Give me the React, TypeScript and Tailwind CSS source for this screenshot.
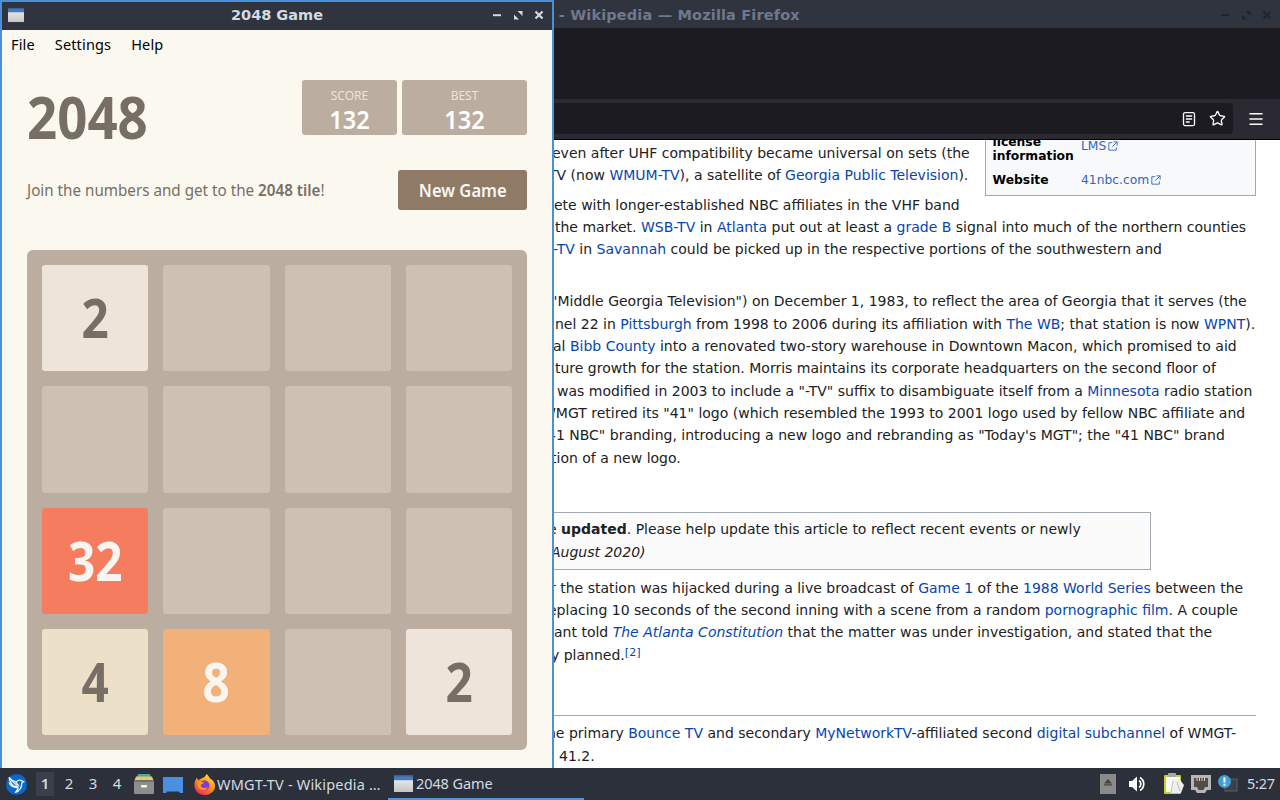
import React from "react";
import { clsx } from "clsx";
import { Menu, Star } from "lucide-react";

type Run = string | { link: string; italic?: boolean } | { bold: string } | { italic: string } | { cite: string };

type Line = {
	className: string;
	runs: Run[];
};

const LEAD: Line[] = [
	{ className: "ml-[-2px]", runs: ["even after UHF compatibility became universal on sets (the"] },
	{ className: "ml-[-6px]", runs: ["TV (now ", { link: "WMUM-TV" }, "), a satellite of ", { link: "Georgia Public Television" }, ")."] },
];

const MARKET: Line[] = [
	{ className: "ml-[0px]", runs: ["ete with longer-established NBC affiliates in the VHF band"] },
	{ className: "ml-[1px]", runs: ["the market. ", { link: "WSB-TV" }, " in ", { link: "Atlanta" }, " put out at least a ", { link: "grade B" }, " signal into much of the northern counties"] },
	{ className: "ml-[-1px]", runs: [{ link: "-TV" }, " in ", { link: "Savannah" }, " could be picked up in the respective portions of the southwestern and"] },
];

const HISTORY: Line[] = [
	{ className: "ml-[-3px]", runs: ["\"Middle Georgia Television\") on December 1, 1983, to reflect the area of Georgia that it serves (the"] },
	{ className: "ml-[1px]", runs: ["nel 22 in ", { link: "Pittsburgh" }, " from 1998 to 2006 during its affiliation with ", { link: "The WB" }, "; that station is now ", { link: "WPNT" }, ")."] },
	{ className: "ml-[-1px]", runs: ["al ", { link: "Bibb County" }, " into a renovated two-story warehouse in Downtown Macon, which promised to aid"] },
	{ className: "ml-[1px]", runs: ["ture growth for the station. Morris maintains its corporate headquarters on the second floor of"] },
	{ className: "ml-[3px]", runs: ["was modified in 2003 to include a \"-TV\" suffix to disambiguate itself from a ", { link: "Minnesota" }, " radio station"] },
	{ className: "ml-[-12px]", runs: ["WMGT retired its \"41\" logo (which resembled the 1993 to 2001 logo used by fellow NBC affiliate and"] },
	{ className: "ml-[-7px]", runs: ["41 NBC\" branding, introducing a new logo and rebranding as \"Today's MGT\"; the \"41 NBC\" brand"] },
	{ className: "ml-[-3px]", runs: ["tion of a new logo."] },
];

const NOTICE: Line[] = [
	{ className: "ml-[-6px]", runs: ["e ", { bold: "updated" }, ". Please help update this article to reflect recent events or newly"] },
	{ className: "ml-[-3px]", runs: [{ italic: "August 2020)" }] },
];

const HIJACK: Line[] = [
	{ className: "ml-[-4px]", runs: ["r the station was hijacked during a live broadcast of ", { link: "Game 1" }, " of the ", { link: "1988 World Series" }, " between the"] },
	{ className: "ml-[-6px]", runs: ["eplacing 10 seconds of the second inning with a scene from a random ", { link: "pornographic film" }, ". A couple"] },
	{ className: "ml-[0px]", runs: ["ant told ", { link: "The Atlanta Constitution", italic: true }, " that the matter was under investigation, and stated that the"] },
	{ className: "ml-[-3px]", runs: ["y planned.", { cite: "[2]" }] },
];

const DIGITAL: Line[] = [
	{ className: "ml-[-7px]", runs: ["he primary ", { link: "Bounce TV" }, " and secondary ", { link: "MyNetworkTV" }, "-affiliated second ", { link: "digital subchannel" }, " of WMGT-"] },
	{ className: "ml-[5px]", runs: ["41.2."] },
];

const BOARD = [2, 0, 0, 0, 0, 0, 0, 0, 32, 0, 0, 0, 4, 8, 0, 2];

const TILE_STYLES: Record<number, string> = {
	0: "bg-[#cdc1b3]",
	2: "bg-[#eee4da] text-[#776e65]",
	4: "bg-[#ece0c8] text-[#776e65]",
	8: "bg-[#f2b179] text-[#f9f6f2]",
	32: "bg-[#f67c5f] text-[#f9f6f2]",
};

function TextRun({ run }: { run: Run }) {
	if (typeof run === "string") return <>{run}</>;
	if ("link" in run) return <a className={clsx("text-[#0645ad]", run.italic && "italic")}>{run.link}</a>;
	if ("bold" in run) return <b>{run.bold}</b>;
	if ("cite" in run) return <span className="relative -top-1 text-[11.2px] leading-none text-[#0645ad]">{run.cite}</span>;
	return <i>{run.italic}</i>;
}

function Lines({ lines }: { lines: Line[] }) {
	return (
		<>
			{lines.map((line, i) => (
				<div key={i} className={clsx("h-[22.4px] whitespace-pre", line.className)}>
					{line.runs.map((run, j) => (
						<TextRun key={j} run={run} />
					))}
				</div>
			))}
		</>
	);
}

function WindowButtons({ className }: { className?: string }) {
	return (
		<svg viewBox="0 0 52 10" className={clsx("h-[10px] w-[52px]", className)} fill="none" stroke="currentColor">
			<path d="M1 5.2h8" strokeWidth="2" />
			<path d="M25.5 1h5v5zM22 4.500v5h5z" fill="currentColor" stroke="none" />
			<path d="M43.5 1.5l7 7M50.5 1.5l-7 7" strokeWidth="2.2" />
		</svg>
	);
}

function WindowIcon({ className }: { className?: string }) {
	return (
		<svg viewBox="0 0 20 18" preserveAspectRatio="none" className={className}>
			<defs>
				<linearGradient id="pane" x1="0" y1="0" x2="0" y2="1">
					<stop offset="0" stopColor="#f2f2f2" />
					<stop offset="1" stopColor="#c6c6c6" />
				</linearGradient>
			</defs>
			<rect width="20" height="18" fill="url(#pane)" />
			<rect width="20" height="5.5" fill="#4a78b8" />
			<rect width="20" height="1.5" fill="#3a5f99" />
		</svg>
	);
}

function ExternalIcon() {
	return (
		<svg viewBox="0 0 12 12" className="ml-[2px] inline h-[10px] w-[10px] align-[-1px]" fill="none" stroke="#3366bb" strokeWidth="1.1">
			<path d="M5 2H1v9h9V7.500M6.500 1H11v4.500M11 1L5 7" />
		</svg>
	);
}

function ScoreBox({ label, value, className }: { label: string; value: number; className: string }) {
	return (
		<div className={clsx("flex h-[55px] flex-col items-center rounded-[3px] bg-[#bbada0]", className)}>
			<div className="mt-[6px] text-[12px] leading-[20px] text-[#eee4da]">{label}</div>
			<div className="-mt-px scale-x-[0.94] text-[25px] font-semibold leading-[28px] text-white">{value}</div>
		</div>
	);
}

function GameWindow() {
	return (
		<div className="flex h-full w-[554px] shrink-0 flex-col border-x-2 border-t-2 border-[#4a90d9] bg-[#fbf8ef]">
			<div className="flex h-7 shrink-0 items-center bg-[#2f343f] pl-[6px] pr-2 text-[#d3dae3]">
				<WindowIcon className="-mt-[3px] h-[14px] w-4" />
				<div className="ml-[38px] flex-1 pb-px text-center font-['DejaVu_Sans',sans-serif] text-[14.5px] font-bold leading-none">2048 Game</div>
				<WindowButtons className="-mt-[3px]" />
			</div>
			<div className="flex h-[30px] shrink-0 items-center gap-[20px] px-[9px] font-['Noto_Sans',sans-serif] text-[14.5px] tracking-[0.15px] text-black">
				<span>File</span>
				<span>Settings</span>
				<span>Help</span>
			</div>
			<div className="px-[25px] pt-5 font-['Noto_Sans',sans-serif] text-[#776e65]">
				<div className="flex h-[90px] justify-between">
					<h1 className="mt-[2px] origin-left scale-x-[0.895] text-[59px] font-bold leading-[68px]">2048</h1>
					<div className="flex gap-[5px]">
						<ScoreBox label="SCORE" value={132} className="w-[95px]" />
						<ScoreBox label="BEST" value={132} className="w-[125px]" />
					</div>
				</div>
				<div className="flex h-10 items-center justify-between">
					<p className="origin-left scale-x-[0.95] whitespace-nowrap text-[16px]">
						Join the numbers and get to the <b className="font-semibold">2048 tile</b>!
					</p>
					<button className="h-10 w-[129px] rounded-[3px] bg-[#8f7a66] text-[18px] font-semibold text-[#f9f6f2]">
						<span className="inline-block scale-x-[0.92] whitespace-nowrap">New Game</span>
					</button>
				</div>
				<div className="mt-10 grid h-[500px] w-[500px] grid-cols-4 grid-rows-4 gap-[15px] rounded-[6px] bg-[#bbada0] p-[15px]">
					{BOARD.map((value, i) => (
						<div
							key={i}
							className={clsx("flex items-center justify-center rounded-[3px] text-[53px] font-bold leading-none", TILE_STYLES[value])}
						>
							{value > 0 && <span className="-mt-px scale-x-[0.9]">{value}</span>}
						</div>
					))}
				</div>
			</div>
		</div>
	);
}

function BrowserChrome() {
	return (
		<>
			<div className="flex h-7 items-center justify-between bg-[#2f343f] pr-[8px]">
				<div className="ml-[-5px] whitespace-pre pt-[3px] font-['DejaVu_Sans',sans-serif] text-[14.5px] font-bold leading-none tracking-[0.15px] text-[#70788d]">' - Wikipedia — Mozilla Firefox</div>
				<WindowButtons className="mt-[2px] text-[#20242c]" />
			</div>
			<div className="h-[71px] bg-[#1c1b22]" />
			<div className="flex h-[41px] items-center border-b border-black bg-[#2b2a33] pb-[2px]">
				<div className="flex h-[31px] w-[679px] items-center justify-end gap-[12px] rounded-r-[4px] bg-[#1c1b22] pr-[7px] pt-px text-[#fbfbfe]">
					<svg viewBox="0 0 16 16" className="h-4 w-4" fill="none" stroke="currentColor" strokeWidth="1.3" strokeLinecap="round">
						<rect x="2.5" y="1.6" width="11" height="13" rx="1.6" />
						<path d="M5.3 5h5.4M5.3 8h5.4M5.3 11h3" />
					</svg>
					<Star className="h-[17px] w-[17px]" strokeWidth={1.9} />
				</div>
				<Menu className="ml-[14px] mt-px h-[18px] w-[18px] text-[#fbfbfe]" strokeWidth={2} />
			</div>
		</>
	);
}

function Infobox() {
	return (
		<div className="float-right mr-6 -mt-[2px] h-[56px] w-[271px] overflow-hidden border border-t-0 border-[#a2a9b1] bg-[#f8f9fa] px-[6.500px] text-[12.32px] leading-[14px] text-black">
			<div className="-mt-[5px] flex h-[29px]">
				<div className="w-[88.5px] font-bold">license information</div>
				<div className="pt-[4px] text-[#3366bb]">LMS<ExternalIcon /></div>
			</div>
			<div className="mt-[9px] flex">
				<div className="w-[88.5px] font-bold">Website</div>
				<div className="text-[#3366bb]">41nbc.com<ExternalIcon /></div>
			</div>
		</div>
	);
}

function BrowserWindow() {
	return (
		<div className="h-full w-[726px] overflow-hidden bg-white">
			<BrowserChrome />
			<div className="pt-[1.8px] font-['DejaVu_Sans',sans-serif] text-[14px] leading-[22.4px] text-[#202122]">
				<Infobox />
				<div className="mb-[7px]"><Lines lines={LEAD} /></div>
				<div className="mb-[29.4px]"><Lines lines={MARKET} /></div>
				<Lines lines={HISTORY} />
				<div className="mt-[43px] h-[58px] w-[597px] border border-l-0 border-[#a2a9b1] bg-[#fbfbfb] pt-[5px]">
					<Lines lines={NOTICE} />
				</div>
				<div className="mt-[6.4px]"><Lines lines={HIJACK} /></div>
				<div className="mr-6 mt-[48.6px] border-t border-[#a2a9b1] pt-[6.5px]">
					<Lines lines={DIGITAL} />
				</div>
			</div>
		</div>
	);
}

function FirefoxIcon() {
	return (
		<svg viewBox="0 0 24 24" className="h-[23px] w-[23px]">
			<defs>
				<linearGradient id="flame" x1="0.8" y1="0" x2="0.2" y2="1">
					<stop offset="0" stopColor="#ffe33c" />
					<stop offset="0.5" stopColor="#ff8a1c" />
					<stop offset="1" stopColor="#f0225f" />
				</linearGradient>
			</defs>
			<path d="M14 1c2 1.500 3 3 3.500 4.500C21 7.500 23 10 23 13.500 23 19 18 23 12 23S1.500 18.500 1.500 12.500c0-3 1-5.500 2.500-7.500l1.500 2.500L9 5.500C11 5 13 4 14 1z" fill="url(#flame)" />
			<circle cx="12" cy="13" r="5.200" fill="#7a3fd0" />
			<path d="M4.500 9c3-1 4 1 7 1-1 2-3 1.500-3.500 3 1 3 5 3.500 7.500 1.500C14 19 7 18.500 5 14z" fill="#ff9a22" />
		</svg>
	);
}

function Launchers() {
	return (
		<>
			<svg viewBox="0 0 20 20" className="ml-[6px] h-[21px] w-[21px]">
				<circle cx="10" cy="10" r="10" fill="#0a68c8" />
				<path d="M3 3.500c2 2.500 4.500 3.500 7 4.200C11 5.500 14 5 17 7.500c-1.500 0-2 .5-2 1.500 0 4-2 7-6 8.500 2-2 2.800-3.500 2.300-5.500C7 12.500 4 9 3 3.500zM3 8c1 3 4 5 7.500 5" fill="none" stroke="#e6f3ff" strokeWidth="1.300" strokeLinejoin="round" />
				<path d="M4 5l6.500 6M9.500 8l3 3.500" stroke="#e6f3ff" strokeWidth="1.200" />
			</svg>
			<div className="ml-[9px] flex h-6 text-[15px]">
				<span className="flex w-[18px] justify-center bg-[#3b3f4b] font-semibold">1</span>
				<span className="ml-[3px] w-6 text-center">2</span>
				<span className="w-6 text-center">3</span>
				<span className="w-6 text-center">4</span>
			</div>
			<svg viewBox="0 0 20 20" className="ml-[5px] h-5 w-5">
				<path d="M4 0h12l1 4H3z" fill="#4aa9a8" />
				<path d="M2 2.500h16l1.500 4H.500z" fill="#e6cb61" />
				<rect y="6" width="20" height="14" rx="1" fill="#8b8e8d" />
				<rect y="6" width="20" height="2" fill="#6f7373" />
				<rect x="7" y="11" width="6" height="2.500" rx="1" fill="#fff" />
			</svg>
			<svg viewBox="0 0 20 16" className="ml-[9px] mt-px h-4 w-5">
				<path d="M0 0h20v16h-3l-1-1.500H4L3 16H0z" fill="#4a90e2" />
			</svg>
		</>
	);
}

function Tray() {
	return (
		<div className="ml-auto flex items-center">
			<svg viewBox="0 0 16 20" className="h-5 w-4">
				<rect width="16" height="20" fill="#8d8b8a" />
				<path d="M8 5l4 4.500H4zM4 10.200h8v1.300H4z" fill="#45443f" />
			</svg>
			<svg viewBox="0 0 18 16" className="ml-3 h-4 w-[18px]">
				<path d="M1 5h3l5-4.500v15L4 11H1z" fill="#fff" />
				<path d="M11 4.500c2.500 1.800 2.500 5.200 0 7M12 1.500c5 3 5 10 0 13" fill="none" stroke="#fff" strokeWidth="1.700" />
			</svg>
			<svg viewBox="0 0 20 22" className="ml-[18px] h-[22px] w-5">
				<rect y="2" width="17" height="19" rx="1" fill="#c7cf32" />
				<rect x="2" y="4" width="14" height="15" fill="#fafaf5" />
				<rect x="4" width="8" height="4" rx="1" fill="#a9aaa5" />
				<path d="M9 7h7l4 5-3 8H7z" fill="#ededeb" />
				<path d="M9 8l-2 11M13 9l3 9" stroke="#aaa" strokeWidth=".7" />
			</svg>
			<svg viewBox="0 0 20 18" className="ml-[7px] h-[18px] w-5">
				<path d="M0 0h20v15h-4l-2 3H6l-2-3H0z" fill="#b5b5b3" />
				<path d="M3 3h14v9h-3l-1.500 3h-5L6 12H3z" fill="#504e46" />
				<path d="M6 3v3M8.500 3v3M11 3v3M13.500 3v3" stroke="#ddd6ae" />
			</svg>
			<svg viewBox="0 0 20 18" className="ml-[7px] h-[18px] w-5">
				<rect x="7" y="4" width="12" height="12" fill="#3b4146" stroke="#596063" />
				<circle cx="6.500" cy="6.500" r="6.500" fill="#3fa0dc" />
				<path d="M6.500 2.500v5M6.500 8.800v2" stroke="#fff" strokeWidth="2" />
			</svg>
			<span className="ml-[9px] mr-[4px] w-[29px] whitespace-nowrap text-[14.5px] tracking-[-0.2px]">5:27</span>
		</div>
	);
}

function Taskbar() {
	return (
		<div className="flex h-8 items-center bg-[#2b303b] font-['Noto_Sans',sans-serif] text-[#d3dae3]">
			<Launchers />
			<div className="ml-[10px] flex h-full w-[195px] items-center">
				<FirefoxIcon />
				<span className="ml-px mt-px whitespace-nowrap text-[14.5px] tracking-[0.2px]">WMGT-TV - Wikipedia …</span>
			</div>
			<div className="flex h-full w-[196px] items-center border-b-2 border-[#5294e2] pl-[6px]">
				<WindowIcon className="h-[17px] w-[19px]" />
				<span className="ml-[3px] mt-[2px] whitespace-nowrap text-[14.5px] tracking-[-0.1px]">2048 Game</span>
			</div>
			<Tray />
		</div>
	);
}

export default function App() {
	return (
		<div className="flex h-[800px] w-[1280px] flex-col overflow-hidden">
			<div className="flex h-[768px]">
				<GameWindow />
				<BrowserWindow />
			</div>
			<Taskbar />
		</div>
	);
}
